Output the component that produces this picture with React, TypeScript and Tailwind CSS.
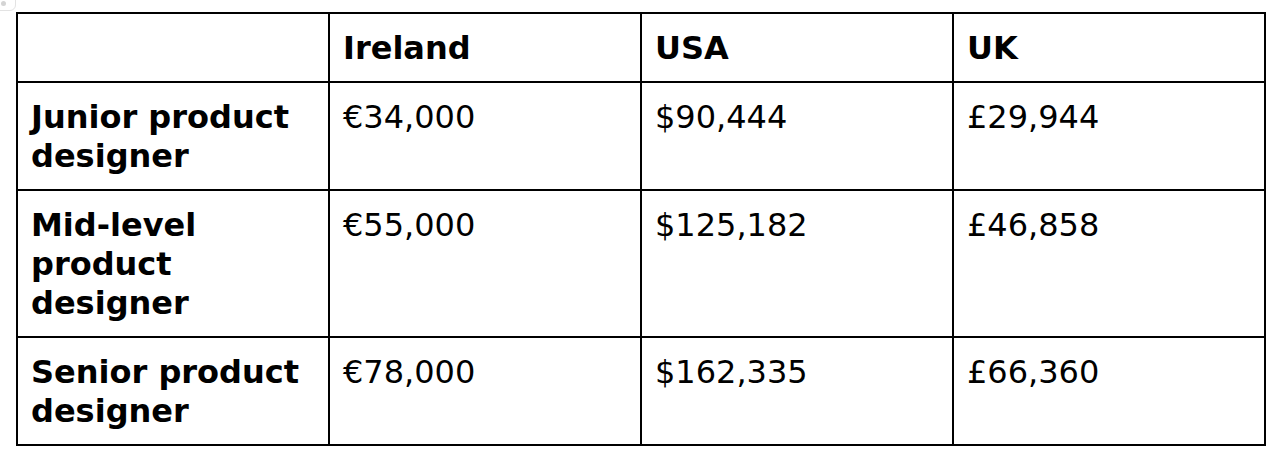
import React from "react";

const rows: { label: string; ie: string; us: string; uk: string }[] = [
  { label: "Junior product designer", ie: "€34,000", us: "$90,444", uk: "£29,944" },
  { label: "Mid-level product designer", ie: "€55,000", us: "$125,182", uk: "£46,858" },
  { label: "Senior product designer", ie: "€78,000", us: "$162,335", uk: "£66,360" },
];

export default function App() {
  const cell = "border-2 border-black align-top pl-[13px] pr-[10px] pt-[15px] pb-[13px] text-left";
  return (
    <div
      className="relative w-[1280px] h-[460px] bg-white overflow-hidden text-black"
      style={{ fontFamily: '"DejaVu Sans", Verdana, sans-serif' }}
    >
      <div className="absolute left-[-30px] top-[-30px] w-[46px] h-[41px] rounded-[6px] border border-[#e3e3e3] bg-white">
        <div className="absolute left-[30px] top-[30px] w-[5px] h-[5px] rounded-full bg-[#d4d4d4]" />
      </div>
      <div className="pl-[16px] pt-[12px] pr-[14px]">
        <table className="w-full table-fixed border-collapse border-2 border-black text-[32px] leading-[39px]">
          <thead>
            <tr>
              <th className={cell}></th>
              <th className={`${cell} font-bold`}>Ireland</th>
              <th className={`${cell} font-bold`}>USA</th>
              <th className={`${cell} font-bold`}>UK</th>
            </tr>
          </thead>
          <tbody>
            {rows.map((r) => (
              <tr key={r.label}>
                <th className={`${cell} font-bold`}>{r.label}</th>
                <td className={cell}>{r.ie}</td>
                <td className={cell}>{r.us}</td>
                <td className={cell}>{r.uk}</td>
              </tr>
            ))}
          </tbody>
        </table>
      </div>
    </div>
  );
}
